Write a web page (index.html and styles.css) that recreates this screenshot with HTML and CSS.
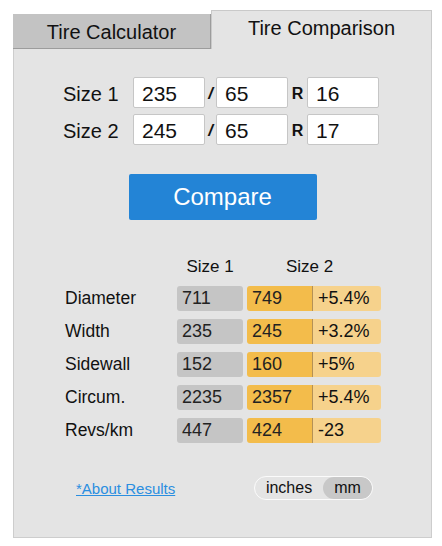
FILE: index.html
```html
<!DOCTYPE html>
<html lang="en">
<head>
    <meta charset="UTF-8">
    <meta name="viewport" content="width=device-width, initial-scale=1.0">
    <title>Tire Comparison</title>
    <link rel="stylesheet" href="styles.css">
</head>
<body>
    <div class="wrap">
        <div class="tabs">
            <div class="tab tab-calc">Tire Calculator</div>
            <div class="tab tab-active">Tire Comparison</div>
        </div>
        <div class="panel">
            <div class="size-row">
                <span class="size-label">Size 1</span>
                <input class="size-input" type="text" value="235">
                <span class="sep">/</span>
                <input class="size-input" type="text" value="65">
                <span class="sep sep-r">R</span>
                <input class="size-input" type="text" value="16">
            </div>
            <div class="size-row">
                <span class="size-label">Size 2</span>
                <input class="size-input" type="text" value="245">
                <span class="sep">/</span>
                <input class="size-input" type="text" value="65">
                <span class="sep sep-r">R</span>
                <input class="size-input" type="text" value="17">
            </div>

            <div class="btn-row">
                <button class="compare-button">Compare</button>
            </div>

            <div class="results">
                <div class="res-head">
                    <span></span>
                    <span class="head-1">Size 1</span>
                    <span class="head-2">Size 2</span>
                </div>
                <div class="res-row">
                    <span class="res-label">Diameter</span>
                    <span class="cell cell-grey">711</span>
                    <span class="cell-pair"><span class="cell cell-orange">749</span><span class="cell cell-diff">+5.4%</span></span>
                </div>
                <div class="res-row">
                    <span class="res-label">Width</span>
                    <span class="cell cell-grey">235</span>
                    <span class="cell-pair"><span class="cell cell-orange">245</span><span class="cell cell-diff">+3.2%</span></span>
                </div>
                <div class="res-row">
                    <span class="res-label">Sidewall</span>
                    <span class="cell cell-grey">152</span>
                    <span class="cell-pair"><span class="cell cell-orange">160</span><span class="cell cell-diff">+5%</span></span>
                </div>
                <div class="res-row">
                    <span class="res-label">Circum.</span>
                    <span class="cell cell-grey">2235</span>
                    <span class="cell-pair"><span class="cell cell-orange">2357</span><span class="cell cell-diff">+5.4%</span></span>
                </div>
                <div class="res-row">
                    <span class="res-label">Revs/km</span>
                    <span class="cell cell-grey">447</span>
                    <span class="cell-pair"><span class="cell cell-orange">424</span><span class="cell cell-diff">-23</span></span>
                </div>
            </div>

            <div class="footer">
                <a class="about-link" href="#">*About Results</a>
                <div class="unit-toggle">
                    <span class="unit">inches</span>
                    <span class="unit unit-on">mm</span>
                </div>
            </div>
        </div>
    </div>
</body>
</html>
```

FILE: styles.css
```css
body {
    margin: 0;
    background: #ffffff;
    font-family: "Liberation Sans", Arial, sans-serif;
    color: #111;
}
.wrap {
    width: 419px;
    margin: 10px 0 0 13px;
}
.tabs {
    display: flex;
    align-items: flex-end;
}
.tab {
    box-sizing: border-box;
    font-size: 20px;
    display: flex;
    align-items: center;
    justify-content: center;
}
.tab-calc {
    width: 198px;
    height: 35px;
    padding-top: 2px;
    background: #c3c3c3;
    border-right: 1px solid #9c9c9c;
    border-bottom: 1px solid #9c9c9c;
}
.tab-active {
    width: 221px;
    height: 39px;
    padding-bottom: 4px;
    background: #e4e4e4;
    border: 1px solid #c9c9c9;
    border-bottom: none;
}
.panel {
    box-sizing: border-box;
    height: 489px;
    background: #e4e4e4;
    border: 1px solid #cdcdcd;
    border-top: none;
    padding-top: 28px;
}
.size-row {
    display: flex;
    align-items: center;
    height: 31px;
    margin-bottom: 6px;
    padding-left: 49px;
}
.size-label {
    width: 70px;
    padding-top: 3px;
    font-size: 20px;
}
.size-input {
    box-sizing: border-box;
    width: 72px;
    height: 31px;
    margin: 0;
    padding: 2px 0 0 8px;
    border: 1px solid #c6c6c6;
    border-radius: 2px;
    background: #fff;
    font-family: "Liberation Sans", Arial, sans-serif;
    font-size: 21px;
    color: #111;
}
.sep {
    width: 11px;
    padding-top: 2px;
    text-align: center;
    font-size: 17px;
    font-weight: bold;
    font-style: italic;
}
.sep-r {
    width: 19px;
    font-style: normal;
    font-size: 16px;
}
.btn-row {
    display: flex;
    justify-content: center;
    margin-top: 29px;
}
.compare-button {
    width: 188px;
    height: 46px;
    border: none;
    border-radius: 2px;
    background: #2384d6;
    color: #fff;
    font-family: "Liberation Sans", Arial, sans-serif;
    font-size: 24px;
    padding-top: 0;
}
.results {
    margin-top: 34px;
    padding-left: 51px;
}
.res-head, .res-row {
    display: grid;
    grid-template-columns: 108px 66px 134px;
    column-gap: 4px;
    align-items: center;
}
.res-head {
    height: 26px;
    font-size: 17px;
    margin-bottom: 6px;
}
.head-1 {
    text-align: center;
}
.head-2 {
    padding-left: 39px;
}
.res-row {
    height: 25px;
    margin-bottom: 8px;
}
.res-label {
    font-size: 17.5px;
}
.cell {
    box-sizing: border-box;
    height: 25px;
    display: flex;
    align-items: center;
    padding-left: 5px;
    font-size: 18px;
    color: #222;
}
.cell-grey {
    background: #c5c5c5;
    border-radius: 3px;
}
.cell-pair {
    display: flex;
}
.cell-orange {
    width: 66px;
    background: #f3bc4b;
    border-right: 1px solid #b59155;
    border-radius: 3px 0 0 3px;
}
.cell-diff {
    width: 68px;
    background: #f6d28c;
    border-radius: 0 3px 3px 0;
    color: #111;
}
.footer {
    display: flex;
    align-items: center;
    margin-top: 33px;
    padding-left: 62px;
}
.about-link {
    font-size: 15px;
    color: #2a8ee0;
    width: 178px;
}
.unit-toggle {
    box-sizing: border-box;
    display: flex;
    width: 119px;
    height: 24px;
    border: 1px solid #fbfbfb;
    border-radius: 12px;
    overflow: hidden;
}
.unit {
    display: flex;
    align-items: center;
    justify-content: center;
    font-size: 16px;
    color: #111;
}
.unit:first-child {
    width: 68px;
}
.unit-on {
    flex: 1;
    background: #c8c8c8;
    border-radius: 11px;
}
```
